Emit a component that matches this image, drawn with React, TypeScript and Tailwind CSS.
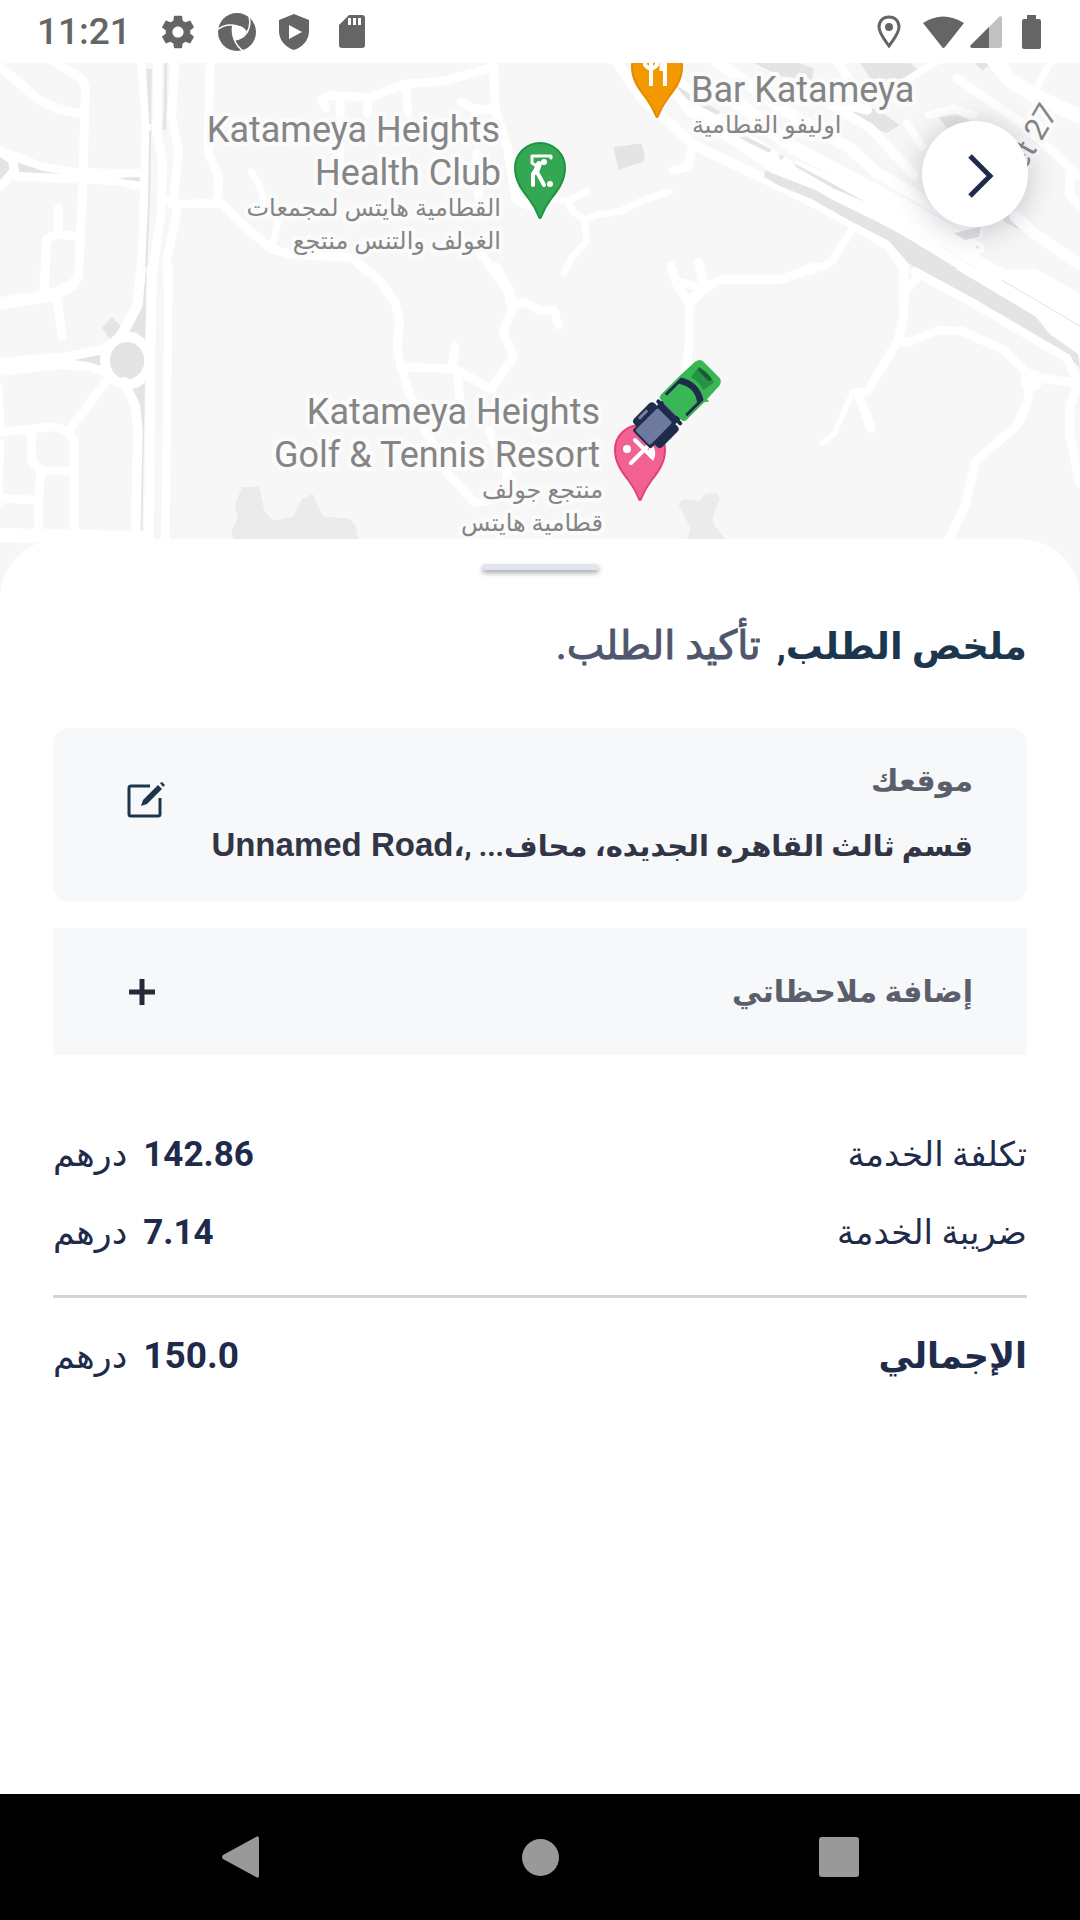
import React from "react";

const ROAD = "#ffffff";
const BLOCK = "#e4e4e4";

type TileProps = { x: number; y: number; children: React.ReactNode };

/* One quarter of the map; each tile keeps its own drawing grid. */
function Tile({ x, y, children }: TileProps) {
  return <g transform={`translate(${x} ${y}) scale(0.3444 0.3333)`}>{children}</g>;
}

function Road({ d, w = 26 }: { d: string; w?: number }) {
  return <path d={d} fill="none" stroke={ROAD} strokeWidth={w} strokeLinecap="round" strokeLinejoin="round" />;
}

function Pin({ x, y, fill, edge, children }: { x: number; y: number; fill: string; edge: string; children: React.ReactNode }) {
  return (
    <g transform={`translate(${x} ${y})`}>
      <path
        d="M-25 0A25 25 0 0 1 25 0C25 13 18 22 11 31C5 39 3 44 1 49Q0 51 -1 49C-3 44 -5 39 -11 31C-18 22 -25 13 -25 0Z"
        fill={fill}
        stroke={edge}
        strokeWidth="2"
      />
      {children}
    </g>
  );
}

function Truck() {
  return (
    <g transform="translate(676 405) rotate(-45)">
      <rect x="-43" y="-20" width="29" height="40" rx="4" fill="#1f2b4b" />
      <rect x="-36" y="-18" width="12" height="3" rx="1" fill="#77809d" />
      <rect x="-49" y="-13" width="46" height="26" rx="2" fill="#1f2b4b" />
      <rect x="-47" y="-11" width="32" height="21" rx="2" fill="#6d799f" />
      <rect x="-9" y="-10" width="7" height="18" fill="#6d799f" />
      <rect x="-12" y="-17" width="4" height="35" rx="2" fill="#1f2b4b" />
      <path d="M-7 -14Q-7 -18 -3 -18H26L44 -17Q50 -16 50 -11V11Q50 16 44 17L26 18V21L22 18H-3Q-7 18 -7 14Z" fill="#3ab755" />
      <path d="M0 -16H23Q33 0 23 16H0V13H17Q26 0 17 -13H0Z" fill="#1f2b4b" />
      <path d="M30 -9L43 -11Q46 0 43 11L30 9Q33 0 30 -9Z" fill="#249444" />
      <path d="M40 -9L43 -10Q46 0 43 8L40 6Z" fill="#1c5b38" />
    </g>
  );
}

function MapDrawing() {
  return (
    <svg
      viewBox="0 63 1080 537"
      preserveAspectRatio="xMidYMin slice"
      className="block h-full w-full"
      role="img"
      aria-label="Katameya Heights"
    >
      <rect x="0" y="63" width="1080" height="537" fill="#f7f7f7" />
      <Tile x={0} y={0}>
        <path d="M0 468L20 475L28 500L20 528L0 540Z" fill={BLOCK} />
        <path d="M50 488L120 510L185 522L55 517Z" fill={BLOCK} />
        <Road d="M-10 190L110 298L165 325L245 345" w={27} />
        <Road d="M150 180L236 235L248 265L240 560L228 830L205 855L150 880L0 905" />
        <Road d="M0 450L120 499L210 516L410 520" w={24} />
        <Road d="M0 455L35 480L42 510L15 545L0 560M30 528L350 543L412 562" w={26} />
        <path d="M340 535L405 530L405 545Z" fill={BLOCK} />
        <Road d="M170 625L170 703L225 710M170 703L136 716L128 880" />
        <Road d="M410 175L425 370L420 540L414 750L402 905" />
        <path d="M424 207H441L439 372H433Z" fill={BLOCK} />
        <path d="M436 390L433 600L420 900" fill="none" stroke={BLOCK} strokeWidth="6" />
        <Road d="M458 175L455 400L472 480L468 640L445 800L440 905" />
        <path d="M481 189L480 320L477 390" fill="none" stroke={BLOCK} strokeWidth="9" />
        <Road d="M508 175L498 350L518 450L505 590L513 640L484 780L490 905" />
        <Road d="M610 175L607 300L605 460L634 530L632 600" />
        <Road d="M490 600L500 612L645 610L690 660L785 745L850 765L1020 772L1100 840L1145 905" />
        <Road d="M730 515L755 560L770 620M812 640L792 735" w={20} />
        <Road d="M1420 205L1290 243L1175 252L1075 292L962 286L934 298L945 324" />
        <Road d="M1432 175L1438 330L1475 450L1498 600L1568 630" />
        <Road d="M1178 252L1185 340M1070 292L1066 340M988 290L985 560M1340 305L1370 325L1440 330M1385 460L1390 600" />
        <Road d="M1395 760L1475 870L1480 905" />
      </Tile>
      <Tile x={540} y={0}>
        <path d="M620 189H750L795 205L790 240L700 228Z" fill={BLOCK} />
        <path d="M930 189H1075L1105 215L1090 238L960 238Z" fill={BLOCK} />
        <path d="M890 290L990 335L1045 375L1005 400L920 360Z" fill={BLOCK} />
        <path d="M213 442L295 430L305 470L300 485L228 510Z" fill={BLOCK} />
        <path d="M1262 189H1312L1285 212Z" fill={BLOCK} />
        <Road d="M215 175L300 300L450 437L670 545L790 605L900 668L1010 735L1056 800V905" w={30} />
        <Road d="M500 175L700 325L900 445L980 520L1130 610L1270 700" w={34} />
        <Road d="M345 195L450 325L700 500L960 625L1300 815" w={60} />
        <Road d="M530 270L730 440L1100 640L1270 745" w={40} />
        <path d="M740 480L1130 650L1280 770L1568 925V1010L1360 905L960 665L740 530Z" fill={ROAD} />
        <path d="M1170 740L1240 790L1440 900" fill="none" stroke="#f1f1f1" strokeWidth="2" />
        <path d="M380 245L440 285L525 335L515 345L430 300Z" fill={BLOCK} />
        <path d="M560 400L590 405L672 448L665 458L600 425Z" fill={BLOCK} />
        <path d="M693 462L710 470L698 482Z" fill={BLOCK} />
        <path d="M735 488L840 545L945 607L850 565L745 502Z" fill={BLOCK} />
        <path d="M655 512L800 570L850 600L980 665L1060 710L1360 900H1235L1070 790L1012 722L900 662L790 598L690 555L650 530Z" fill={BLOCK} />
        <Road d="M860 175L950 330L820 300L960 385L1085 525" w={28} />
        <Road d="M1160 180L1030 262L960 290M1480 189L1440 270" w={20} />
        <Road d="M1305 165L1365 240L1440 290L1568 350" w={44} />
        <Road d="M1065 370L1110 440M1130 345L1200 325L1260 345" w={24} />
        <path d="M1160 352L1212 345L1250 362L1180 385Z" fill={BLOCK} />
        <Road d="M1210 235L1400 370L1510 475L1568 530M1540 520L1537 580L1568 620" w={26} />
        <path d="M1200 700L1235 720L1275 710L1280 680Z" fill={BLOCK} />
        <path d="M1345 640L1365 645L1395 690L1345 665Z" fill={BLOCK} />
        <Road d="M1380 650L1440 705L1568 795" w={34} />
        <path d="M1262 742L1274 737V748Z" fill={BLOCK} />
        <Road d="M443 440L430 500L386 512" />
        <Road d="M40 595L80 604L95 635L130 660L135 725L90 775L70 820M80 603L136 574M130 660L165 645L235 633L290 605L375 575" w={20} />
        <Road d="M905 690L850 780L825 800H795L700 838H530L480 860L440 895M380 797L395 850L435 905M460 787L475 850M400 845L470 862" w={24} />
      </Tile>
      <Tile x={0} y={270}>
        <path d="M297 173L325 140L352 170L320 208Z" fill={BLOCK} />
        <Road d="M0 105L160 80L215 45L230 0M128 0V70M166 85L180 200" />
        <Road d="M0 278L200 261L300 237L345 208L398 110L410 0" w={30} />
        <Road d="M0 303L170 284L260 288L312 308" w={28} />
        <path d="M215 270L290 255L292 288L260 277Z" fill={BLOCK} />
        <ellipse cx="369" cy="272" rx="64" ry="70" fill={BLOCK} stroke={ROAD} strokeWidth="28" />
        <path d="M376 185L414 110L424 0H428L421 207L395 187Z" fill={BLOCK} />
        <path d="M380 357L400 354L421 340L413 782H407L410 480L405 410Z" fill={BLOCK} />
        <Road d="M308 335L205 475M0 487L155 470L198 485L215 515V790M90 495L92 573L120 603H205M118 610L112 690L113 790M0 685L105 690" />
        <Road d="M-6 350L0 460M0 520L-6 640L-2 700" />
        <Road d="M360 335L393 408L400 480L394 790" w={28} />
        <Road d="M440 -5L432 815" w={28} />
        <Road d="M490 -5L480 815" w={24} />
        <Road d="M-10 795L425 805" w={42} />
        <Road d="M1050 -10L1105 35L1147 95L1160 150L1153 235L1165 290L1185 360L1240 490L1300 610L1380 700L1460 680L1475 620L1420 480" />
        <Road d="M1165 290L1310 297L1322 230M1310 290L1425 358L1492 262L1460 185L1490 110L1520 95L1568 122M1490 110L1480 60L1440 -10M1330 310L1334 380" />
        <path
          d="M672 785L690 745L682 705L703 651H753L768 725L795 752L852 740L875 688L908 672L938 740L1010 745L1033 765L1040 810H678Z"
          fill="#ebebeb"
        />
      </Tile>
      <Tile x={540} y={270}>
        <Road d="M0 122H40L54 165" />
        <Road d="M382 -5L397 40L433 100V230L420 330M433 100L480 55L530 28H700L800 -5M465 -5L475 50" />
        <path d="M1205 -2H1440L1568 70V265L1480 200L1440 145Z" fill={ROAD} />
        <path d="M1100 0H1212L1440 140L1480 192L1562 252L1568 295L1530 255L1250 85Z" fill={BLOCK} />
        <path d="M1340 30L1568 168" stroke={BLOCK} strokeWidth="3" />
        <Road d="M1090 5L1250 95L1530 265L1560 330" />
        <Road d="M1100 20L1056 65M1056 -5V140L1040 210L950 365L910 370" />
        <Road d="M904 375L855 490L820 520" w={16} />
        <Road d="M925 375L962 476M1040 216H1070L1160 180L1225 183L1350 242L1425 320L1568 342M1425 320L1415 400L1385 465L1265 575L1235 705L1185 815M1562 340L1539 410L1537 490L1568 640" />
        <circle cx="1428" cy="330" r="32" fill={ROAD} />
        <path d="M402 702L418 688L465 692L480 672L510 668L523 685L502 740L505 765L534 800V810H427L437 775Z" fill="#ebebeb" />
      </Tile>

      <Pin x={540} y={168} fill="#34a753" edge="#1f9341">
        <g fill="none" stroke="#fff" strokeWidth="3" strokeLinecap="round" strokeLinejoin="round">
          <path d="M11 -10V-12H-8V-5L-2 -1" />
          <path d="M-2 -1L-7 6V17M-3 4L4 17" strokeWidth="4" />
          <path d="M-1 -4L-4 4" strokeWidth="6" />
        </g>
        <circle cx="4" cy="-6" r="3" fill="#fff" />
        <circle cx="10" cy="16" r="3" fill="#fff" />
      </Pin>
      <Pin x={657} y={67} fill="#f29900" edge="#e58a00">
        <g stroke="#fff" strokeWidth="4" fill="none">
          <path d="M-12 -12V-2Q-6 5 0 -2V-12M-6 -12V19M8 19V-12" />
          <path d="M5 -12V4" strokeWidth="5" />
        </g>
      </Pin>
      <Pin x={640} y={450} fill="#f16292" edge="#e93d78">
        <circle cx="-13" cy="-1" r="4" fill="#fff" />
        <path d="M-9 13L7 -3M-5 -10L12 7" stroke="#fff" strokeWidth="4" strokeLinecap="round" />
        <path d="M9 -10Q19 1 13 11L6 3Q12 -2 9 -10Z" fill="#fff" />
      </Pin>
      <Truck />

      <g
        fill="#858585"
        stroke="#fbfbfb"
        strokeWidth="8"
        strokeLinejoin="round"
        paintOrder="stroke"
        fontFamily="Roboto, 'DejaVu Sans', sans-serif"
        fontSize="36"
      >
        <text x="500" y="142" textAnchor="end">Katameya Heights</text>
        <text x="501" y="185" textAnchor="end">Health Club</text>
        <text x="600" y="424" textAnchor="end">Katameya Heights</text>
        <text x="600" y="467" textAnchor="end">Golf &amp; Tennis Resort</text>
        <text x="691" y="102">Bar Katameya</text>
        <g fontSize="24">
          <text x="501" y="216" textAnchor="end">القطامية هايتس لمجمعات</text>
          <text x="501" y="249" textAnchor="end">الغولف والتنس منتجع</text>
          <text x="603" y="498" textAnchor="end">منتجع جولف</text>
          <text x="603" y="531" textAnchor="end">قطامية هايتس</text>
          <text x="692" y="133">اوليفو القطامية</text>
        </g>
        <text transform="translate(1016 186) rotate(-60)" fontSize="31">eet 27</text>
      </g>
    </svg>
  );
}

function StatusBar() {
  return (
    <header dir="ltr" className="flex h-[63px] shrink-0 items-center bg-white pr-[39px] pl-[37px] text-[#656565]">
      <span className="mr-[30px] text-[37px] leading-none font-medium">11:21</span>
      <div className="flex flex-1 items-center gap-[22px]">
        <svg viewBox="2 2 20 20" className="size-[34px]" fill="currentColor" aria-hidden="true">
          <path d="M19.14 12.94c.04-.3.06-.61.06-.94 0-.32-.02-.64-.07-.94l2.03-1.58c.18-.14.23-.41.12-.61l-1.92-3.32c-.12-.22-.37-.29-.59-.22l-2.39.96c-.5-.38-1.03-.7-1.62-.94l-.36-2.54c-.04-.24-.24-.41-.48-.41h-3.84c-.24 0-.43.17-.47.41l-.36 2.54c-.59.24-1.13.57-1.62.94l-2.39-.96c-.22-.08-.47 0-.59.22L2.74 8.87c-.12.21-.08.47.12.61l2.03 1.58c-.05.3-.09.63-.09.94s.02.64.07.94l-2.03 1.58c-.18.14-.23.41-.12.61l1.92 3.32c.12.22.37.29.59.22l2.39-.96c.5.38 1.03.7 1.62.94l.36 2.54c.05.24.24.41.48.41h3.84c.24 0 .44-.17.47-.41l.36-2.54c.59-.24 1.13-.56 1.62-.94l2.39.96c.22.08.47 0 .59-.22l1.92-3.32c.12-.22.07-.47-.12-.61l-2.01-1.58zM12 15.3c-1.82 0-3.3-1.48-3.3-3.3s1.48-3.3 3.3-3.3 3.3 1.48 3.3 3.3-1.48 3.3-3.3 3.3z" />
        </svg>
        <svg viewBox="0 0 40 40" className="size-10" aria-hidden="true">
          <circle cx="20" cy="20" r="19" fill="currentColor" />
          <path d="M16 14Q25 12 29 20Q26 27 18 28Q14 21 16 14Z" fill="#fff" />
          <g fill="none" stroke="#fff" strokeWidth="1.5">
            <path d="M0 18C6 13 13 12 20 14C25 15 28 17 30 21" />
            <path d="M32 3C34 12 32 20 26 25C23 27 20 28 17 28" />
            <path d="M16 13C14 21 17 34 28 40" />
          </g>
        </svg>
        <svg viewBox="0 0 30 36" className="h-9 w-[30px]" fill="currentColor" aria-hidden="true">
          <path fillRule="evenodd" d="M15 0L30 6V17C30 26 24 33 15 36C6 33 0 26 0 17V6ZM10 11V25L23 18Z" />
        </svg>
        <svg viewBox="0 0 26 33" className="ml-2 h-[33px] w-[26px]" fill="currentColor" aria-hidden="true">
          <path fillRule="evenodd" d="M10 0H23Q26 0 26 3V30Q26 33 23 33H3Q0 33 0 30V10ZM9 3V10H12V3ZM14 3V10H17V3ZM19 3V10H22V3Z" />
        </svg>
      </div>
      <div className="flex items-center">
        <svg viewBox="0 0 24 34" className="mr-[22px] h-[34px] w-6" aria-hidden="true">
          <path d="M12 2C6 2 2 6 2 12C2 18 7 24 12 31C17 24 22 18 22 12C22 6 18 2 12 2Z" fill="none" stroke="currentColor" strokeWidth="3" />
          <circle cx="12" cy="12" r="4" fill="currentColor" />
        </svg>
        <svg viewBox="0 0 41 32" className="mr-[6px] h-8 w-[41px]" fill="currentColor" aria-hidden="true">
          <path d="M0 7Q20 -6 41 7L22 31Q20 33 19 31Z" />
        </svg>
        <svg viewBox="0 0 32 32" className="mr-5 size-8" fill="currentColor" aria-hidden="true">
          <path d="M30 0Q32 0 32 2V30Q32 32 30 32H2Q-1 31 1 29Z" fill="#c1c1c1" />
          <path d="M19 11V32H2Q-1 31 1 29Z" />
        </svg>
        <svg viewBox="0 0 19 34" className="h-[34px] w-[19px]" fill="currentColor" aria-hidden="true">
          <path d="M5 0H14V4H17Q19 4 19 6V32Q19 34 17 34H2Q0 34 0 32V6Q0 4 2 4H5Z" />
        </svg>
      </div>
    </header>
  );
}

function Amount({ value, className }: { value: string; className: string }) {
  return (
    <dd className="flex items-baseline gap-4">
      <span className={className}>{value}</span>
      <span className="text-[35px]">درهم</span>
    </dd>
  );
}

function CostRow({ label, amount }: { label: string; amount: string }) {
  return (
    <div className="flex h-[78px] items-baseline justify-between leading-[80px]">
      <dt className="text-[34px]">{label}</dt>
      <Amount value={amount} className="text-[35px] font-bold" />
    </div>
  );
}

export default function App() {
  return (
    <div className="flex min-h-screen flex-col bg-white font-['Roboto','DejaVu_Sans',sans-serif]">
      <StatusBar />
      <section className="relative h-[537px] shrink-0 overflow-hidden">
        <MapDrawing />
        <button
          type="button"
          aria-label="رجوع"
          className="absolute top-[58px] right-[52px] flex size-[106px] items-center justify-center rounded-full bg-white pt-1 pl-3 shadow-[0_4px_30px_rgba(60,60,90,0.28)]"
        >
          <svg viewBox="0 0 26 44" className="h-11 w-[26px]" fill="none" stroke="#1f2b4b" strokeWidth="5" aria-hidden="true">
            <path d="M2 2L22 22L2 42" />
          </svg>
        </button>
      </section>

      <main dir="rtl" className="relative -mt-[61px] flex-1 rounded-t-[60px] bg-white px-[53px] pt-[25px]">
        <div className="mx-auto h-[6px] w-[117px] rounded-full bg-[#e2e6f0] shadow-[0_3px_5px_rgba(0,0,0,0.35)]" />
        <h1 className="mt-12 flex items-baseline gap-4 leading-[56px]">
          <span className="text-[37px] font-bold text-[#1c374d]">ملخص الطلب,</span>
          <span className="text-[40px] text-[#50566e] [-webkit-text-stroke:1px_#50566e]">تأكيد الطلب.</span>
        </h1>

        <section className="mt-[53px] flex h-[174px] justify-between rounded-2xl bg-[#f7f8fa] ps-[54px] pe-[72px]">
          <div className="pt-[29px]">
            <h2 className="text-[30px] leading-[48px] font-bold text-[#5a5f6b]">موقعك</h2>
            <p className="mt-4 text-[29px] leading-[48px] font-bold whitespace-nowrap text-[#313545]">
              قسم ثالث القاهره الجديده، محاف... ,،<span className="font-['Liberation_Sans',sans-serif] text-[33px]">Unnamed Road</span>
            </p>
          </div>
          <button type="button" aria-label="تعديل الموقع" className="mt-[52px] size-[40px] shrink-0">
            <svg viewBox="0 0 40 40" className="size-10 text-[#1c374d]" fill="none" aria-hidden="true">
              <path d="M25 6H6Q4 6 4 8V34Q4 36 6 36H33Q35 36 35 34V18" stroke="currentColor" strokeWidth="3" />
              <path d="M16 26L18 20L33 5L37 9L22 24Z" fill="currentColor" />
              <path d="M35 3L37 2L40 5L38 7Z" fill="currentColor" />
            </svg>
          </button>
        </section>

        <button
          type="button"
          className="mt-[26px] flex h-[127px] w-full items-center justify-between bg-[#f7f8fa] ps-[54px] pe-[76px] text-[30px] leading-[48px] font-bold text-[#5a5f6b]"
        >
          <span>إضافة ملاحظاتي</span>
          <svg viewBox="0 0 26 26" className="size-[26px]" stroke="#252a37" strokeWidth="5" aria-hidden="true">
            <path d="M13 0V26M0 13H26" />
          </svg>
        </button>

        <dl className="mt-[59px] text-[#1f2b4b]">
          <CostRow label="تكلفة الخدمة" amount="142.86" />
          <CostRow label="ضريبة الخدمة" amount="7.14" />
          <div className="mt-[25px] flex items-baseline justify-between border-t-[3px] border-[#d3d3d3] pt-[28px] leading-[60px]">
            <dt className="text-[35px] font-bold">الإجمالي</dt>
            <Amount value="150.0" className="text-[37px] font-bold" />
          </div>
        </dl>
      </main>

      <nav dir="ltr" className="flex h-[126px] shrink-0 items-center justify-center gap-[179px] bg-black text-[#999999]">
        <button type="button" aria-label="Back" className="flex h-full w-[120px] items-center justify-center">
          <svg viewBox="0 0 38 42" className="h-[42px] w-[38px]" fill="currentColor" aria-hidden="true">
            <path d="M34 1Q37 -1 37 3V39Q37 43 34 41L1 23Q-1 21 1 19Z" />
          </svg>
        </button>
        <button type="button" aria-label="Home" className="flex h-full w-[120px] items-center justify-center">
          <span className="size-[37px] rounded-full bg-[#999999]" />
        </button>
        <button type="button" aria-label="Recents" className="flex h-full w-[120px] items-center justify-center">
          <span className="size-10 rounded-[3px] bg-[#999999]" />
        </button>
      </nav>
    </div>
  );
}
